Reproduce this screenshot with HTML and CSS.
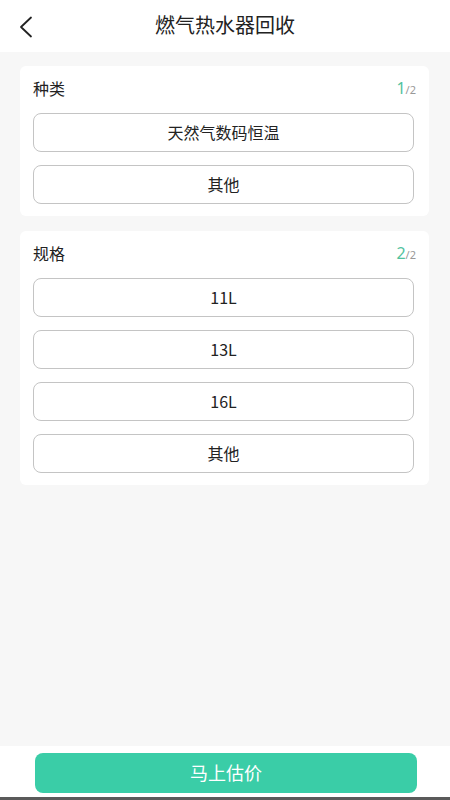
FILE: index.html
```html
<!DOCTYPE html>
<html lang="zh-CN">
<head>
<meta charset="utf-8">
<title>燃气热水器回收</title>
<link rel="stylesheet" href="styles.css">
</head>
<body>
<div class="page">
  <header class="header">
    <span class="back">
      <svg width="16" height="22" viewBox="0 0 16 22"><path d="M13 1.5 L3 11 L13 20.5" fill="none" stroke="#222" stroke-width="1.8" stroke-linecap="round" stroke-linejoin="round"/></svg>
    </span>
    <h1 class="title">燃气热水器回收</h1>
  </header>
  <main class="main">
    <section class="card">
      <div class="card-head">
        <span class="card-title">种类</span>
        <span class="counter"><span class="cur">1</span><span class="tot">/2</span></span>
      </div>
      <div class="options">
        <div class="option">天然气数码恒温</div>
        <div class="option">其他</div>
      </div>
    </section>
    <section class="card">
      <div class="card-head">
        <span class="card-title">规格</span>
        <span class="counter"><span class="cur">2</span><span class="tot">/2</span></span>
      </div>
      <div class="options">
        <div class="option">11L</div>
        <div class="option">13L</div>
        <div class="option">16L</div>
        <div class="option">其他</div>
      </div>
    </section>
  </main>
  <footer class="footer">
    <div class="submit">马上估价</div>
  </footer>
</div>
</body>
</html>
```
FILE: styles.css
```css
* { box-sizing: border-box; }
html, body { margin: 0; padding: 0; }
body {
  font-family: "Noto Sans CJK SC", "Noto Sans", sans-serif;
  color: #222;
  background: #f7f7f7;
}
.page {
  height: 800px;
  display: flex;
  flex-direction: column;
}
.header {
  height: 52px;
  background: #fff;
  display: flex;
  align-items: center;
  justify-content: center;
  position: relative;
}
.back {
  position: absolute;
  left: 18px;
  top: 16px;
  display: flex;
}
.title {
  margin: 0 0 2px;
  font-size: 20px;
  font-weight: 400;
  line-height: 28px;
  color: #222;
}
.main {
  flex: 1;
  padding: 14px 21px 0 20px;
  display: flex;
  flex-direction: column;
  gap: 15px;
}
.card {
  background: #fff;
  border-radius: 6px;
  padding: 11px 15px 12px 13px;
}
.card-head {
  display: flex;
  justify-content: space-between;
  align-items: center;
  height: 22px;
  margin-bottom: 14px;
}
.card-title {
  font-size: 16px;
  line-height: 22px;
}
.counter {
  display: flex;
  align-items: baseline;
  margin-right: -2px;
}
.cur {
  font-size: 16px;
  color: #52c29e;
  font-family: "Noto Sans", sans-serif;
}
.tot {
  font-size: 11px;
  color: #999;
  font-family: "Noto Sans", sans-serif;
}
.options {
  display: flex;
  flex-direction: column;
  gap: 13px;
}
.option {
  height: 39px;
  border: 1px solid #c4c4c4;
  border-radius: 8px;
  display: flex;
  align-items: center;
  justify-content: center;
  font-size: 16px;
  line-height: 22px;
  padding-bottom: 2px;
  color: #222;
}
.footer {
  height: 54px;
  background: #fff;
  padding: 7px 33px 0 35px;
  border-bottom: 3px solid #5a5a5a;
}
.submit {
  height: 40px;
  background: #3acda7;
  border-radius: 8px;
  color: #fff;
  font-size: 18px;
  padding-bottom: 2px;
  display: flex;
  align-items: center;
  justify-content: center;
}
```
